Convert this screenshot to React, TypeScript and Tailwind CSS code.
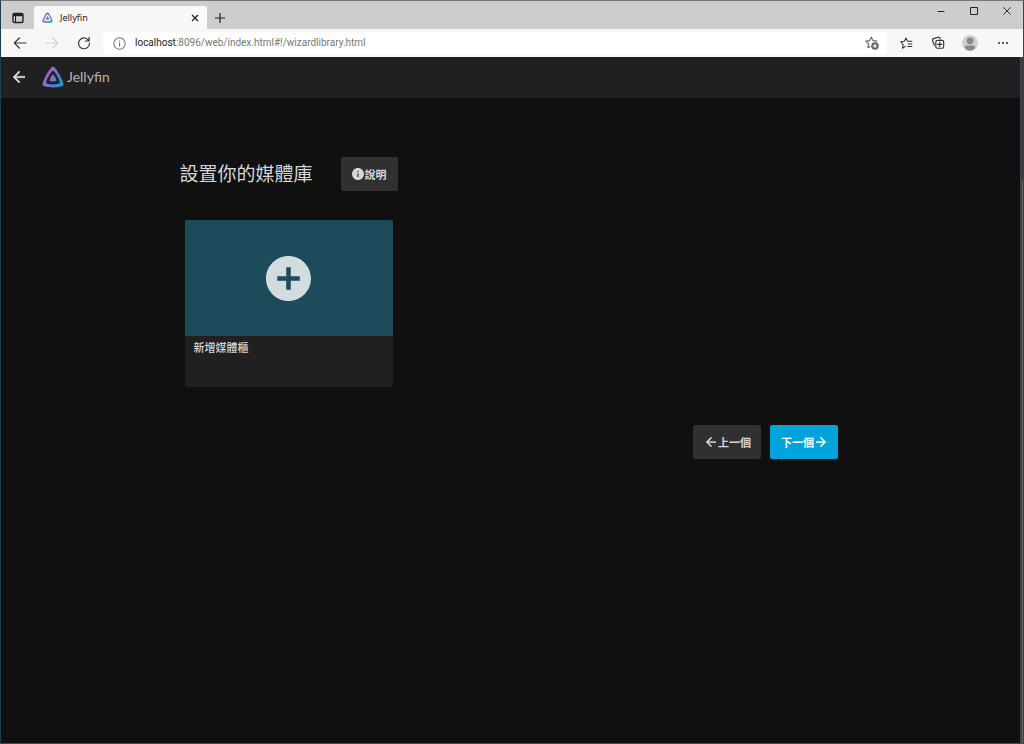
import React from "react";

type IconProps = { className?: string };

function JellyfinMark({ className, id }: IconProps & { id: string }) {
  return (
    <svg viewBox="10 10 492 492" className={className} aria-hidden="true">
      <defs>
        <linearGradient id={id} x1="110" y1="213" x2="497" y2="436" gradientUnits="userSpaceOnUse">
          <stop offset="0" stopColor="#aa5cc3" />
          <stop offset="1" stopColor="#00a4dc" />
        </linearGradient>
      </defs>
      <path
        fill={`url(#${id})`}
        d="M256 201.600c-20.400 0-86.200 119.300-76.200 139.400s142.500 19.900 152.400 0-55.700-139.400-76.200-139.400z"
      />
      <path
        fill={`url(#${id})`}
        fillRule="evenodd"
        d="M256 23.300C194.400 23.300-3.800 382.700 26.300 443.200s429.700 59.900 459.400 0S317.700 23.300 256 23.300zm150.500 367.500c-19.500 39.200-281.400 39.600-301.100 0S215.700 115.200 256 115.200s170.100 235.500 150.500 275.600z"
      />
    </svg>
  );
}

function Stroke({ className, children }: IconProps & { children: React.ReactNode }) {
  return (
    <svg
      viewBox="0 0 16 16"
      className={className}
      fill="none"
      stroke="currentColor"
      strokeWidth="1.300"
      strokeLinecap="round"
      strokeLinejoin="round"
      aria-hidden="true"
    >
      {children}
    </svg>
  );
}

function Arrow({ className, flip }: IconProps & { flip?: boolean }) {
  return (
    <svg viewBox="4 4 16 16" className={className} fill="currentColor" stroke="currentColor" strokeWidth="0.600" aria-hidden="true">
      <path
        d={
          flip
            ? "M12 4l-1.410 1.410L16.170 11H4v2h12.170l-5.580 5.590L12 20l8-8z"
            : "M20 11H7.830l5.590-5.590L12 4l-8 8 8 8 1.410-1.410L7.830 13H20v-2z"
        }
      />
    </svg>
  );
}

function TitleBar() {
  return (
    <div className="flex h-7 bg-[#cdcdcd] text-[#222]">
      <button type="button" aria-label="Tab actions" className="flex w-[33px] items-center justify-center pt-[5px]">
        <svg viewBox="0 0 12 12" className="h-3 w-3" fill="none" stroke="currentColor" aria-hidden="true">
          <rect x="1" y="1.500" width="10" height="9" rx="1.500" strokeWidth="1.400" />
          <path d="M1 3h10" strokeWidth="2.400" />
          <path d="M3.500 3v7" strokeWidth="1" />
        </svg>
      </button>
      <div className="mt-[5px] flex w-[173px] items-center rounded-t-[3px] bg-[#f8f8f8] pl-2 pr-[6px]">
        <JellyfinMark id="tab-mark" className="h-[11px] w-[11px]" />
        <span className="ml-[7px] flex-1 text-[9px] leading-3">Jellyfin</span>
        <button type="button" aria-label="Close tab" className="p-[2px]">
          <svg viewBox="0 0 8 8" className="h-2 w-2" stroke="currentColor" strokeWidth="1.300" aria-hidden="true">
            <path d="M1 1l6 6M7 1l-6 6" />
          </svg>
        </button>
      </div>
      <button type="button" aria-label="New tab" className="flex w-[25px] items-center justify-center pt-[5px]">
        <svg viewBox="0 0 12 12" className="h-3 w-3" stroke="currentColor" strokeWidth="1.200" aria-hidden="true">
          <path d="M6 1v10M1 6h10" />
        </svg>
      </button>
      <div className="flex-1" />
      <div className="flex h-5 items-center">
        <button type="button" aria-label="Minimize" className="flex w-[33px] justify-center">
          <svg viewBox="0 0 8 8" className="h-2 w-2" stroke="currentColor" aria-hidden="true">
            <path d="M0.500 4.500h7" />
          </svg>
        </button>
        <button type="button" aria-label="Maximize" className="flex w-[33px] justify-center">
          <svg viewBox="0 0 8 8" className="h-2 w-2" fill="none" stroke="currentColor" aria-hidden="true">
            <path d="M0.500 0.500h7v7h-7z" />
          </svg>
        </button>
        <button type="button" aria-label="Close" className="flex w-[33px] justify-center">
          <svg viewBox="0 0 8 8" className="h-2 w-2" stroke="currentColor" strokeWidth="0.900" aria-hidden="true">
            <path d="M0.300 0.300l7.400 7.400M7.700 0.300l-7.400 7.400" />
          </svg>
        </button>
      </div>
    </div>
  );
}

function AddressBar() {
  return (
    <div className="flex h-7 items-center bg-[#f7f7f7] text-[#333]">
      <button type="button" aria-label="Back" className="ml-3 mr-[18px]">
        <Stroke className="h-[14px] w-[14px]">
          <path d="M15 8H1.500M7.500 2l-6 6 6 6" />
        </Stroke>
      </button>
      <button type="button" aria-label="Forward" disabled className="mr-[18px] text-[#d0d0d0]">
        <Stroke className="h-[14px] w-[14px]">
          <path d="M1 8h13.500M8.500 2l6 6-6 6" />
        </Stroke>
      </button>
      <button type="button" aria-label="Reload" className="mr-3">
        <Stroke className="h-[14px] w-[14px]">
          <path d="M13.500 5.500A6.200 6.200 0 1 0 14.200 8M13.800 1.500v4.200H9.600" />
        </Stroke>
      </button>
      <div className="flex h-[22px] flex-1 items-center rounded-[3px] bg-white pl-[10px] pr-2">
        <Stroke className="h-[13px] w-[13px] text-[#777]">
          <circle cx="8" cy="8" r="7" />
          <path d="M8 7.200v4M8 4.600v.2" />
        </Stroke>
        <a href="#wizard" className="ml-[9px] flex-1 font-['Roboto','Noto_Sans',sans-serif] text-[10px] leading-4 text-[#777]">
          <span className="text-[#222]">localhost</span>:8096/web/index.html#!/wizardlibrary.html
        </a>
        <button type="button" aria-label="Add to favorites" className="text-[#666]">
          <Stroke className="h-[14px] w-[14px]">
            <path d="M6 12L3.300 13.400l.7-4.400L.9 5.900l4.300-.6L7.200 1.300l2 4 4.300.6" />
            <circle cx="11.400" cy="11.400" r="3.600" fill="currentColor" />
            <path d="M11.400 9.600v3.600M9.600 11.400h3.600" stroke="#fff" />
          </Stroke>
        </button>
      </div>
      <button type="button" aria-label="Favorites" className="ml-[13px]">
        <Stroke className="h-[13px] w-[13px]">
          <path d="M6.500 11.500L3 13.800l.9-4.600L1 5.900l4.400-.6 2-4 1.900 4h5.200M10 8.500h4.500M9.500 11.700h5" />
        </Stroke>
      </button>
      <button type="button" aria-label="Collections" className="ml-[18px]">
        <Stroke className="h-[14px] w-[14px]">
          <rect x="5.500" y="5" width="9" height="9" rx="1.800" />
          <path d="M10 7v5M7.500 9.500h5" />
          <path d="M3.800 10.500L1.800 5.200c-.3-1 .1-1.800 1-2.200l5.300-1.600c1-.3 1.700.1 2.200 1.100l.4.800" />
        </Stroke>
      </button>
      <button type="button" aria-label="Profile" className="ml-[17px]">
        <svg viewBox="0 0 16 16" className="h-4 w-4" aria-hidden="true">
          <circle cx="8" cy="8" r="8" fill="#d2d0ce" />
          <circle cx="8" cy="5.800" r="3.400" fill="#8a8886" />
          <path d="M2.800 12.700c0-1.500 1-2.200 2.400-2.200h5.600c1.400 0 2.400.7 2.400 2.200C11.800 14.700 10 15.500 8 15.500s-3.800-.8-5.200-2.800z" fill="#8a8886" />
        </svg>
      </button>
      <button type="button" aria-label="Settings and more" className="ml-[19px] mr-[14px]">
        <svg viewBox="0 0 12 4" className="h-1 w-3" fill="currentColor" aria-hidden="true">
          <circle cx="2" cy="2" r="1.100" />
          <circle cx="6" cy="2" r="1.100" />
          <circle cx="10" cy="2" r="1.100" />
        </svg>
      </button>
    </div>
  );
}

function WizardPage() {
  return (
    <div className="flex flex-1 flex-col bg-[#101010]">
      <header className="flex h-[41px] items-center bg-[#202020] pb-px pl-3 text-[#dedede]">
        <button type="button" aria-label="返回">
          <Arrow className="h-3 w-3" />
        </button>
        <a href="#home" className="ml-[17px] flex items-center">
          <JellyfinMark id="header-mark" className="h-[22px] w-[22px]" />
          <span className="ml-[3px] font-['Lato','Liberation_Sans',sans-serif] text-[14px] leading-5 text-[#b5b5b5]">
            Jellyfin
          </span>
        </a>
      </header>
      <div className="flex-1 pr-1">
        <main className="mx-auto w-full max-w-[658px] pt-[59px] font-['Noto_Sans_CJK_TC',sans-serif] text-[#d6d6d6]">
          <div className="flex items-center">
            <h1 className="pb-[2px] text-[19px] leading-7">設置你的媒體庫</h1>
            <button
              type="button"
              className="ml-7 flex h-[34px] w-[57px] items-center justify-center rounded-[2px] bg-[#303030] text-[11px] font-bold leading-4"
            >
              <svg viewBox="2 2 20 20" className="mr-px h-3 w-3" fill="currentColor" aria-hidden="true">
                <path d="M12 2C6.480 2 2 6.480 2 12s4.480 10 10 10 10-4.480 10-10S17.520 2 12 2zm1 15h-2v-6h2v6zm0-8h-2V7h2v2z" />
              </svg>
              說明
            </button>
          </div>
          <button
            type="button"
            className="ml-[5px] mt-[29px] block w-[208px] overflow-hidden rounded-[2px] bg-[#202020] text-left"
          >
            <span className="flex h-[116px] items-center justify-center bg-[#1d4b5b]">
              <svg viewBox="2 2 20 20" className="h-[45px] w-[45px] text-[#d2dbde]" fill="currentColor" aria-hidden="true">
                <path d="M12 2C6.480 2 2 6.480 2 12s4.480 10 10 10 10-4.480 10-10S17.520 2 12 2zm5 11h-4v4h-2v-4H7v-2h4V7h2v4h4v2z" />
              </svg>
            </span>
            <span className="block h-[51px] px-[9px] pt-[3px] text-[11px] font-medium leading-4">新增媒體櫃</span>
          </button>
          <div className="mt-[38px] flex justify-end gap-[9px] text-[11px] font-bold leading-4">
            <button
              type="button"
              className="flex h-[34px] w-[68px] items-center justify-center gap-[2px] rounded-[2px] bg-[#303030] pl-1"
            >
              <Arrow className="h-[10px] w-[10px]" />
              上一個
            </button>
            <button
              type="button"
              className="flex h-[34px] w-[68px] items-center justify-center gap-[2px] rounded-[2px] bg-[#00a4dc] text-white"
            >
              下一個
              <Arrow flip className="h-[10px] w-[10px]" />
            </button>
          </div>
        </main>
      </div>
    </div>
  );
}

export default function App() {
  return (
    <div className="flex min-h-screen flex-col border-b border-l border-r border-t border-b-[#484848] border-l-[#1d3d48] border-r-[#334650] border-t-[#74787a] bg-[#101010] font-['Noto_Sans','Noto_Sans_CJK_TC',sans-serif]">
      <TitleBar />
      <AddressBar />
      <div className="flex flex-1">
        <WizardPage />
        <div className="flex w-[3px] flex-col bg-[#424242]">
          <div className="ml-[2px] h-[123px] bg-[#2b3944]" />
          <div className="ml-[2px] flex-1 bg-[#606060]" />
        </div>
      </div>
    </div>
  );
}
